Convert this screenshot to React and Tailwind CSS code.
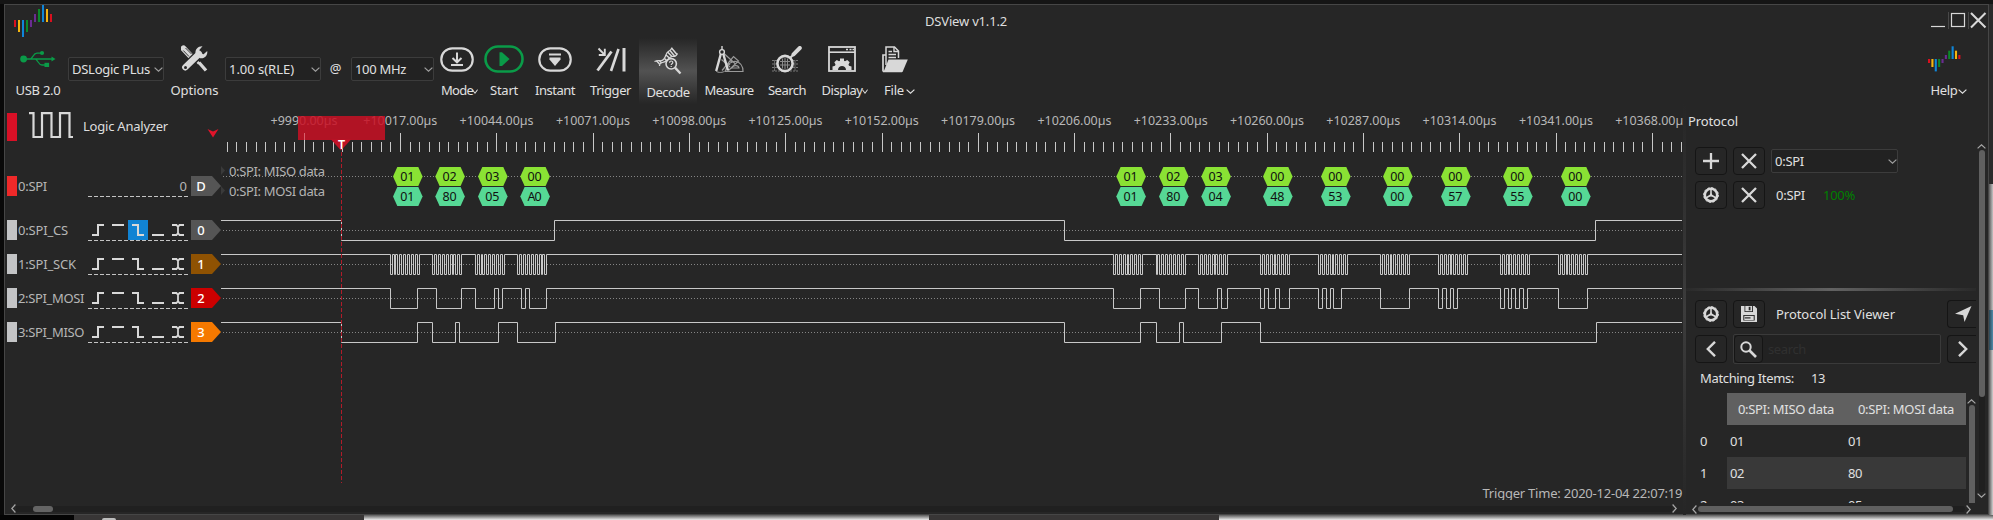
import React, { useLayoutEffect, useRef } from "react";

const INK = "#d8d8d8";
const BG = "#262626";

/* Text run whose tracking is adjusted so that it spans a given width. */
function T({ w, children, className = "" }) {
  const ref = useRef(null);
  useLayoutEffect(() => {
    const el = ref.current;
    if (!w || !el) return;
    el.style.letterSpacing = "0px";
    const n = String(children).length;
    const d = (w - el.getBoundingClientRect().width) / n;
    el.style.letterSpacing = d.toFixed(3) + "px";
  }, [w, children]);
  return (
    <span ref={ref} className={"inline-block whitespace-pre " + className}>
      {children}
    </span>
  );
}

function Chevron({ className = "", w = 9, h = 5 }) {
  return (
    <svg width={w} height={h} viewBox="0 0 9 5" preserveAspectRatio="none" className={"shrink-0 " + className}>
      <path d="M.6.6 4.5 4.2 8.4.6" fill="none" stroke="currentColor" strokeWidth="1.2" />
    </svg>
  );
}

const LOGO = [
  ["#d9101f", 20, 27], ["#f5b50f", 20, 32], ["#0f86d9", 20, 37], ["#0b8a2b", 20, 32], ["#6a2c91", 20, 27],
  ["#6a2c91", 14, 22], ["#0b8a2b", 9, 22], ["#0f86d9", 5, 22], ["#f5b50f", 9, 22], ["#d9101f", 14, 22],
];
function Logo() {
  return (
    <svg width="38" height="32" viewBox="14 5 38 32">
      {LOGO.map(([c, a, b], i) => <rect key={i} x={14 + i * 4} y={a} width="2" height={b - a} fill={c} />)}
    </svg>
  );
}
const HELP = [
  ["#d9101f", 59, 63], ["#f5b50f", 59, 67], ["#0f86d9", 59, 71.4], ["#0b8a2b", 59, 67], ["#6a2c91", 59, 63],
  ["#6a2c91", 55, 59], ["#0b8a2b", 50.7, 59], ["#0f86d9", 46.3, 59], ["#f5b50f", 50.7, 59], ["#d9101f", 55, 59],
];
function HelpLogo() {
  return (
    <svg width="33" height="26" viewBox="1928 46 33 26">
      {HELP.map(([c, a, b], i) => <rect key={i} x={1928 + i * 3.37} y={a} width="2.1" height={b - a} fill={c} />)}
    </svg>
  );
}

const UsbIcon = () => (
  <svg width="36" height="18" viewBox="20 50 36 18" fill="#0a9b48" stroke="#0a9b48">
    <circle cx="23.6" cy="59" r="3.4" stroke="none" />
    <path d="M23 59H53M30.5 59C33 57.5 33.5 53.2 37 53.2H41M35.5 59C38 60.5 38.500 65 42 65H46" fill="none" strokeWidth="1.3" />
    <path d="M51.500 56.600 55.500 59 51.500 61.400Z" stroke="none" />
    <circle cx="42" cy="53" r="2.100" stroke="none" />
    <rect x="44.500" y="62.800" width="4.600" height="4.200" stroke="none" />
  </svg>
);
const OptionsIcon = () => (
  <svg width="28" height="28" viewBox="0 0 28 28" fill="none">
    <path d="M2.500 3.500 9.500 11" stroke={INK} strokeWidth="6" strokeLinecap="round" />
    <path d="M2.300 5.500 8 11.500M4.500 3 10.500 9" stroke={BG} strokeWidth=".9" />
    <path d="M15 15.500 18 18.500" stroke={INK} strokeWidth="2.500" />
    <path d="M18 17.500 25 25.500" stroke={INK} strokeWidth="3.400" />
    <path d="M4.500 22.500 17 10" stroke={BG} strokeWidth="9" />
    <path d="M4.300 22.300 18 9" stroke={INK} strokeWidth="6.400" strokeLinecap="round" />
    <path d="M21.500 1.200C17 1 13.800 4.500 14.600 8.500L19 13.200C23.500 14 27 10.500 26.200 6L22.600 9.200 19 8.600 18.300 5Z" fill={INK} />
    <circle cx="4.500" cy="22.500" r="1.500" fill={BG} />
  </svg>
);
const ModeIcon = () => (
  <svg width="34" height="25" viewBox="0 0 34 25" fill="none" stroke={INK}>
    <rect x="1.300" y="1.300" width="31.400" height="22.400" rx="11" strokeWidth="2.200" />
    <path d="M17 5.500V14.500M12.500 11 17 15.300 21.500 11" strokeWidth="2" />
    <path d="M11 18H23" strokeWidth="2" />
  </svg>
);
const StartIcon = () => (
  <svg width="40" height="28" viewBox="0 0 40 28" fill="none">
    <rect x="1.500" y="1.500" width="37" height="25" rx="12.500" stroke="#0a9b48" strokeWidth="2.600" />
    <path d="M15.500 7.200H18L25.600 14 18 21H15.500Z" fill="#0a9b48" />
  </svg>
);
const InstantIcon = () => (
  <svg width="34" height="25" viewBox="0 0 34 25" fill="none" stroke={INK}>
    <rect x="1.300" y="1.300" width="31.400" height="22.400" rx="11" strokeWidth="2.200" />
    <path d="M11 7.500H23" strokeWidth="2" />
    <path d="M11.500 10.500H22.500V12.500L17 19 11.500 12.500Z" fill={INK} stroke="none" />
  </svg>
);
const TriggerIcon = () => (
  <svg width="30" height="25" viewBox="0 0 30 25" fill="none" stroke={INK}>
    <path d="M1.500 23.500 15.500 4.500" strokeWidth="2.800" />
    <path d="M15 24 22.500 2" strokeWidth="2.600" />
    <path d="M28 1V24.500" strokeWidth="3" />
    <path d="M2.500 1.500 8 7.200M8.800 1.800V8H2.800" strokeWidth="1.900" />
  </svg>
);
const DecodeIcon = () => (
  <svg width="28" height="28" viewBox="0 0 28 28" fill="none" stroke={INK} strokeWidth="1.200">
    <path d="M.5 14.500C6 12 6.500 15.500 9.500 12.500 12.500 10 11 6 15 4 17.500 2.800 17.500 2 17.800.5" />
    <path d="M5.500 19C5 14.500 9 16.500 12 14 15 11.500 16 9 19.500 9.500 21.500 9.700 22.500 8.500 23.500 6.500" />
    <path d="M2.500 13.800 5.500 17M5.500 13.800 7.500 15.700M10.500 11.500 13 14M12 8 16 11.500M13.500 5 18 9.500M16 3.500 20.500 9M17.700 1.200 23 7.500" strokeWidth="1.500" />
    <circle cx="17.200" cy="16.800" r="5.200" strokeWidth="1.600" fill="#3e3e3e" />
    <path d="M21 20.600 26.500 26.500" strokeWidth="2.300" />
    <path d="M15.600 15.700C15.600 13.500 18.800 13.500 18.800 15.500 18.800 16.800 17.200 16.600 17.200 18M17.200 19V20" strokeWidth="1.200" />
  </svg>
);
const MeasureIcon = () => (
  <svg width="30" height="27" viewBox="0 0 30 27" fill="none">
    <g stroke="#9a9a9a" strokeWidth="1.200">
      <path d="M11.500 25.500C12.500 17 19 15 22 15.500 26.500 16.500 29 20 29 25.500ZM17.500 22C19.500 18.500 24.500 19 25 22Z" />
      <path d="M8 24.500 19.500 10.500 24.500 15 14.500 24.500M10 7.500 21.500 18M7.500 13.500 16 21" />
      <path d="M12 19.500 14 21.200M14 17 16 18.800M16.200 14.500 18 16.200" />
    </g>
    <path d="M8 0V4" stroke={INK} strokeWidth="1.400" />
    <circle cx="8" cy="6" r="2.400" stroke={INK} strokeWidth="1.400" />
    <path d="M6.800 8 2.200 25M9.300 8 14 24.500" stroke={INK} strokeWidth="2.400" />
    <path d="M2 25C4 27 9 27 11.500 24.500" stroke="#9a9a9a" strokeWidth="1" />
  </svg>
);
const SearchIcon = () => (
  <svg width="30" height="27" viewBox="0 0 30 27" fill="none">
    <path d="M0 14.500H26M0 18H26M0 21.500H26M0 25H26" stroke="#777" strokeWidth="1.200" strokeDasharray="2 1" />
    <path d="M2.500 14V25M23 14V25" stroke="#666" strokeWidth="1" />
    <circle cx="13" cy="17.500" r="7.600" fill={BG} stroke={INK} strokeWidth="2.600" />
    <path d="M8 15.500H18M8 19H18M10.500 12.500V22.500M13 12V23M15.500 12.500V22.500" stroke="#8a8a8a" strokeWidth="1" />
    <path d="M18.500 11.500 21 9" stroke={INK} strokeWidth="2.200" />
    <path d="M21.500 8.300 27.800 2" stroke={INK} strokeWidth="4" strokeLinecap="round" />
  </svg>
);
const DisplayIcon = () => (
  <svg width="28" height="26" viewBox="0 0 28 26" fill="none">
    <rect x="1" y="1" width="26" height="24" stroke={INK} strokeWidth="1.800" />
    <path d="M1 6.200H27" stroke={INK} strokeWidth="1.600" />
    <path d="M18 3.500H20M21.500 3.500H23.500M24.500 3.500H26" stroke={INK} strokeWidth="1.600" />
    <path d="M4.500 24V20.500L7 19.800 7.500 18.600 6.300 16.300 8.800 14 11 15.200 12 14.700V12.500H16V14.700L17 15.200 19.200 14 21.700 16.300 20.500 18.600 21 19.800 23.500 20.500V24H18C18 18.500 10 18.500 10 24Z" fill={INK} />
  </svg>
);
const FileIcon = () => (
  <svg width="27" height="27" viewBox="0 0 27 27" fill="none">
    <path d="M2 25.500V9H5M2 25.500H21" stroke={INK} strokeWidth="1.700" />
    <path d="M5 19V1H13.500L17.500 5V12" stroke={INK} strokeWidth="1.500" />
    <path d="M13 1V5.500H17.500M7.500 5.500H11M7.500 8.500H15M7.500 11.500H15" stroke={INK} strokeWidth="1.400" />
    <path d="M7.500 13.500H26.800L21.500 26H2.500Z" fill={INK} />
  </svg>
);

function Tool({ icon, label, lw, cell, chev, chevW = 6, active }) {
  return (
    <div className={"relative flex h-[66px] shrink-0 flex-col items-center " + cell + (active ? " bg-[linear-gradient(#262626,#525252_50%,#262626)] pt-[2px]" : "")}>
      <div className="flex h-[42px] items-center justify-center">{icon}</div>
      <div className="relative flex h-[20px] items-center justify-center">
        <T w={lw}>{label}</T>
        {chev && <Chevron w={chevW} className={"absolute top-[9px] " + chev} />}
      </div>
    </div>
  );
}

function Combo({ text, tw, className }) {
  return (
    <div className={"flex h-[24px] shrink-0 items-center justify-between rounded-[2px] border border-[#3c3c3c] bg-[#222] pl-[3px] " + className}>
      <T w={tw}>{text}</T>
      <Chevron className="text-[#a0a0a0]" />
    </div>
  );
}

const TOOLS = [
  [<ModeIcon />, "Mode", 32, "w-[46px]", "left-[calc(100%-1px)]", 6],
  [<StartIcon />, "Start", 28, "w-[48px]"],
  [<InstantIcon />, "Instant", 40, "w-[54px]"],
  [<TriggerIcon />, "Trigger", 41, "w-[57px]"],
  [<DecodeIcon />, "Decode", 43, "w-[58px]", null, 0, true],
  [<MeasureIcon />, "Measure", 49, "w-[64px]"],
  [<SearchIcon />, "Search", 38, "w-[52px]"],
  [<DisplayIcon />, "Display", 41, "w-[58px]", "left-[calc(100%-1px)]", 6],
  [<FileIcon />, "File", 20, "w-[46px]", "left-[calc(100%+2px)]", 9],
];

function Toolbar() {
  return (
    <div className="flex h-[66px] shrink-0 pl-[5px] text-[#e0e0e0]">
      <Tool icon={<UsbIcon />} label="USB 2.0" lw={45} cell="w-[56px]" />
      <Combo text="DSLogic PLus" tw={78} className="ml-[2px] mt-[19px] w-[96px]" />
      <Tool icon={<OptionsIcon />} label="Options" lw={48} cell="ml-[6px] w-[49px]" />
      <Combo text="1.00 s(RLE)" tw={65} className="ml-[6px] mt-[19px] w-[96px]" />
      <div className="mt-[20px] w-[29px] shrink-0 text-center"><T>@</T></div>
      <Combo text="100 MHz" tw={51} className="ml-[1px] mt-[19px] w-[83px]" />
      {TOOLS.map(([icon, label, lw, cell, chev, cw, active]) => (
        <Tool key={label} icon={icon} label={label} lw={lw} cell={cell} chev={chev} chevW={cw} active={active} />
      ))}
      <Tool icon={<HelpLogo />} label="Help" lw={27} cell="ml-auto mr-[21px] w-[46px]" chev="left-full" chevW={9} />
    </div>
  );
}

function TitleBar() {
  return (
    <div className="flex h-[33px] shrink-0 pl-[9px] text-[#dedede]">
      <div className="w-[911px] shrink-0"><Logo /></div>
      <div className="pt-[6px]"><T w={82}>DSView v1.1.2</T></div>
      <div className="flex flex-1 justify-end">
        <svg width="60" height="26" viewBox="1928 5 60 26" fill="none" stroke={INK}>
          <path d="M1931 26.500H1945" strokeWidth="1.200" />
          <path d="M1948.500 12V29M1968.500 12V29" stroke="#484848" />
          <rect x="1951.500" y="13.500" width="13" height="13" strokeWidth="1.200" />
          <path d="M1971 13 1985.500 27.500M1985.500 13 1971 27.500" strokeWidth="2.100" />
        </svg>
      </div>
    </div>
  );
}

function TriggerModes({ active }) {
  return (
    <svg width="103" height="22" viewBox="88 0 103 22" fill="none" stroke={INK} strokeWidth="2" className="shrink-0">
      {active && <rect x="128" y="0" width="20" height="20" fill="#1183d3" stroke="none" />}
      <path d="M92 15H98V5H104M112 5H124M132 5H138V15H144M152 15H164" />
      <path d="M172 5H176.500L178 7V13L176.500 15H172M184 5H179.500L178 7M178 13 179.500 15H184" strokeWidth="1.800" />
      <path d="M88 20.500H188" strokeWidth="1" stroke="#c4c4c4" strokeDasharray="4 2" />
    </svg>
  );
}

function Tag({ fill, text }) {
  return (
    <svg width="30" height="20" viewBox="0 0 30 20" className="shrink-0">
      <path d="M0 0H21L30 10 21 20H0Z" fill={fill} />
      <text x="10" y="14.800" textAnchor="middle" fill="#fff" fontSize="13" fontWeight="500">{text}</text>
    </svg>
  );
}

const CHANNELS = [
  ["0:SPI_CS", 50, "#555555", "0", "mt-[24px]", true],
  ["1:SPI_SCK", 58, "#8f5202", "1", "mt-[14px]"],
  ["2:SPI_MOSI", 66, "#cc0000", "2", "mt-[14px]"],
  ["3:SPI_MISO", 66, "#f57900", "3", "mt-[14px]"],
];

function Channels() {
  return (
    <div className="flex w-[216px] shrink-0 flex-col pl-[2px] pt-[9px] text-[#b6b6b6]">
      <div className="flex h-[28px] shrink-0 items-start">
        <div className="h-[28px] w-[10px] bg-[#d81026]" />
        <svg width="46" height="28" viewBox="28 112 46 28" className="ml-[11px] mt-[-1px]" fill="none" stroke={INK} strokeWidth="2.200">
          <path d="M29 113.200H33.500V137H42V113.200H51.500V137H60V113.200H69.500V137H73" />
        </svg>
        <div className="ml-[9px] mt-[3px] text-[#dedede]"><T w={85}>Logic Analyzer</T></div>
        <svg width="12" height="9" viewBox="0 0 12 9" className="ml-[39px] mt-[16px]"><path d="M.5 0 6 2.500 11.500 0 6 8.500Z" fill="#e0142a" /></svg>
      </div>
      <div className="mt-[35px] flex h-[20px] shrink-0 items-center">
        <div className="h-[20px] w-[10px] bg-[#ef2929]" />
        <div className="w-[71px] pl-[1px]"><T w={29}>0:SPI</T></div>
        <div className="relative flex h-[20px] w-[103px] items-center justify-end pr-[4px]">
          0
          <svg width="100" height="1" className="absolute left-0 top-[20px]"><path d="M0 .5H100" stroke="#c4c4c4" strokeDasharray="4 2" /></svg>
        </div>
        <Tag fill="#555555" text="D" />
      </div>
      {CHANNELS.map(([name, w, fill, n, mt, act]) => (
        <div key={name} className={"flex h-[20px] shrink-0 items-center " + mt}>
          <div className="h-[20px] w-[10px] bg-[#c3c4c6]" />
          <div className="w-[71px] pl-[1px]"><T w={w}>{name}</T></div>
          <div className="h-[20px] w-[103px]"><TriggerModes active={act} /></div>
          <Tag fill={fill} text={n} />
        </div>
      ))}
    </div>
  );
}

const X0 = 221, X1 = 1682;
function wave(edges, hi) {
  let level = hi;
  let d = `M${X0} ${level + 0.5}`;
  for (const x of edges) {
    d += `H${x + 0.5}`;
    level = level === hi ? hi + 20 : hi;
    d += `V${level + 0.5}`;
  }
  return d + `H${X1}`;
}
const CS = [341, 554, 1064, 1595];
const MISO = [341, 417, 432, 455, 459, 498, 517, 555, 1064, 1140, 1156, 1179, 1183, 1221, 1260, 1596];
const MOSI = [390, 417, 436, 461, 475, 494, 498, 502, 521, 525, 529, 546, 1113, 1140, 1159, 1185, 1198, 1217, 1221, 1227, 1260, 1264, 1268, 1275, 1279, 1289, 1318, 1322, 1326, 1330, 1333, 1341, 1380, 1409, 1438, 1442, 1446, 1450, 1453, 1457, 1500, 1504, 1508, 1511, 1515, 1519, 1523, 1527, 1558, 1587];
/* Clock bursts: first edge, and the edge index after which the spacing is 1px. */
const BURSTS = [[390, 3], [432, 11], [475, 4], [517, 13], [1113, 8], [1156, 1], [1198, 9], [1260, 8], [1318, 8], [1380, 6], [1438, 7], [1500, 5], [1558, 5]];
const SCK = BURSTS.flatMap(([s, k]) => Array.from({ length: 16 }, (_, i) => s + i * 2 - (i >= k ? 1 : 0)));
const BYTES = [
  [393, "01", "01"], [435.300, "02", "80"], [478, "03", "05"], [520.300, "00", "A0"],
  [1116.300, "01", "01"], [1159, "02", "80"], [1201.300, "03", "04"], [1263, "00", "48"], [1321, "00", "53"],
  [1383, "00", "00"], [1441, "00", "57"], [1503, "00", "55"], [1561, "00", "00"],
];
const TICKS = Array.from({ length: 152 }, (_, i) => i - 8);

function Hex({ x, y, fill, text }) {
  return (
    <g>
      <path d={`M${x} ${y + 9.5}L${x + 4.300} ${y}H${x + 25.300}L${x + 29.600} ${y + 9.5}L${x + 25.300} ${y + 19}H${x + 4.300}Z`} fill={fill} />
      <text x={x + 14.300} y={y + 14} textAnchor="middle" fontSize="12.500" textLength="14" fill="#101010">{text}</text>
    </g>
  );
}

function WaveCanvas() {
  return (
    <svg width="1462" height="396" viewBox="221 104 1462 396" className="block shrink-0" fill="none">
      {TICKS.map((i) => {
        const x = Math.floor(304.2 + i * 9.63) + 0.5;
        return x > 1682 ? null : <path key={i} d={`M${x} ${i % 10 === 0 ? 133 : 142}V152`} stroke="#c8c8c8" />;
      })}
      {Array.from({ length: 15 }, (_, i) => (
        <text key={i} x={304 + i * 96.300} y="125" textAnchor="middle" fontSize="12.500" fill="#b8b8b8" textLength={i ? 74 : 67}>
          {"+" + (9990 + i * 27) + ".00µs"}
        </text>
      ))}
      {[176, 230, 264, 298, 332].map((y) => <path key={y} d={`M223 ${y + 0.5}H1683`} stroke="#858585" strokeDasharray="1 2" />)}
      <path d="M221 166 225 170.500 221 175ZM221 186 225 190.500 221 195Z" fill="#3a3a3a" />
      <text x="229" y="176" fontSize="13" fill="#b4b4b4" textLength="96">0:SPI: MISO data</text>
      <text x="229" y="196" fontSize="13" fill="#b4b4b4" textLength="96">0:SPI: MOSI data</text>
      {BYTES.map(([x, a, b]) => (
        <g key={x}>
          <Hex x={x} y={167} fill="#8ae234" text={a} />
          <Hex x={x} y={187} fill="#56d895" text={b} />
        </g>
      ))}
      <g stroke="#c8c8c8">
        <path d={wave(CS, 220)} />
        <path d={wave(SCK, 254)} />
        <path d={wave(MOSI, 288)} />
        <path d={wave(MISO, 322)} />
      </g>
      <path d="M298 116H385V140H298Z" fill="#c81024" fillOpacity=".86" />
      <path d="M304.500 133V140" stroke="#d8606c" />
      <path d="M331 139.500H351L341 150.500Z" fill="#c01226" />
      <text x="341.500" y="149" textAnchor="middle" fontSize="12.500" fontWeight="600" fill="#fff">T</text>
      <path d="M341.500 152V483" stroke="#b01c2a" strokeDasharray="4 2" />
      <text x="1482.500" y="498" fontSize="13" fill="#b8b8b8" textLength="200">Trigger Time: 2020-12-04 22:07:19</text>
    </svg>
  );
}

function SideArrow({ flip }) {
  return (
    <svg width="5" height="9" viewBox="0 0 5 9" className="shrink-0">
      <path d={flip ? "M.6.5 4.200 4.500.6 8.500" : "M4.400.5.8 4.500 4.400 8.500"} fill="none" stroke="#a8a8a8" strokeWidth="1.200" />
    </svg>
  );
}

function Btn({ children, className = "w-[32px] rounded-[4px] border" }) {
  return <div className={"flex h-[28px] shrink-0 items-center justify-center border-[#151515] " + className}>{children}</div>;
}
const Cross = () => <svg width="16" height="16" viewBox="0 0 16 16"><path d="M1 1 15 15M15 1 1 15" stroke={INK} strokeWidth="2.300" /></svg>;
const Plus = () => <svg width="16" height="16" viewBox="0 0 16 16"><path d="M8 0V16M0 8H16" stroke={INK} strokeWidth="2.300" /></svg>;
const Gear = () => (
  <svg width="16" height="16" viewBox="0 0 16 16" fill="none" stroke={INK}>
    <circle cx="8" cy="8" r="6.200" strokeWidth="2.600" />
    <circle cx="8" cy="8" r="7.400" strokeWidth="1" strokeDasharray="2.200 1.670" />
    <path d="M8 2V8L2.800 11M8 8 13.200 11" strokeWidth="1.600" />
    <path d="M8 5.800 10.200 9.600H5.800Z" fill={INK} stroke="none" />
  </svg>
);
const Save = () => (
  <svg width="16" height="16" viewBox="0 0 16 16">
    <path d="M0 0H3.500V6H12V0H13.500L16 2.500V16H0Z" fill={INK} />
    <rect x="4.300" y="0" width="6.800" height="5.200" fill={INK} />
    <rect x="7.700" y=".8" width="1.800" height="3.500" fill={BG} />
    <path d="M2.300 9H13.700V14.500H2.300Z" fill={BG} /><path d="M3.300 9.900H12.700V14H3.300Z" fill={INK} /><path d="M3.800 11.900H9.500" stroke={BG} strokeWidth="1.200" />
  </svg>
);

function Dock() {
  return (
    <div className="flex w-[302px] shrink-0 flex-col text-[#e0e0e0]">
      <div className="h-[34px] shrink-0 pl-[2px] pt-[7px]"><T w={50}>Protocol</T></div>
      <div className="flex h-[365px] shrink-0">
        <div className="flex w-[290px] shrink-0 flex-col overflow-hidden pt-[9px]">
          <div className="flex h-[28px] shrink-0 items-center gap-[6px] pl-[9px]">
            <Btn><Plus /></Btn>
            <Btn><Cross /></Btn>
            <Combo text="0:SPI" tw={29} className="w-[127px]" />
          </div>
          <div className="mt-[6px] flex h-[28px] shrink-0 items-center gap-[6px] pl-[9px]">
            <Btn><Gear /></Btn>
            <Btn><Cross /></Btn>
            <div className="w-[46px] pl-[5px]"><T w={29}>0:SPI</T></div>
            <div className="text-[#008000]"><T w={32}>100%</T></div>
          </div>
          <div className="mt-[79px] h-[3px] shrink-0 bg-[linear-gradient(90deg,#2a2a2a,#626262_50%,#2a2a2a)]" />
          <div className="mt-[9px] flex h-[28px] shrink-0 items-center gap-[6px] pl-[9px]">
            <Btn><Gear /></Btn>
            <Btn><Save /></Btn>
            <div className="w-[170px] pl-[5px]"><T w={119}>Protocol List Viewer</T></div>
            <Btn className="w-[29px] rounded-l-[4px] border-y border-l">
              <svg width="17" height="16" viewBox="0 0 17 16" className="ml-[3px]"><path d="M16.500 0 9.500 16 8.200 9.300 0 7.800Z" fill={INK} /></svg>
            </Btn>
          </div>
          <div className="mt-[7px] flex h-[28px] shrink-0 items-center gap-[6px] pl-[9px]">
            <Btn><svg width="10" height="16" viewBox="0 0 10 16"><path d="M9 .8 1.800 8 9 15.200" fill="none" stroke={INK} strokeWidth="2.400" /></svg></Btn>
            <div className="flex h-[30px] w-[208px] items-center rounded-[2px] border border-[#3a3a3a] bg-[#222]">
              <Btn className="w-[29px] rounded-[4px] border border-[#3a3a3a] bg-[#262626]">
                <svg width="17" height="17" viewBox="0 0 17 17" fill="none" stroke={INK}><circle cx="6" cy="6" r="4.700" strokeWidth="2" /><path d="M9.500 9.500 16 16" strokeWidth="2.600" /></svg>
              </Btn>
              <div className="pl-[5px] text-[#303030]"><T w={38}>search</T></div>
            </div>
            <Btn className="w-[29px] rounded-l-[4px] border-y border-l"><svg width="10" height="16" viewBox="0 0 10 16" className="ml-[2px]"><path d="M1 .8 8.200 8 1 15.200" fill="none" stroke={INK} strokeWidth="2.400" /></svg></Btn>
          </div>
          <div className="flex h-[30px] shrink-0 items-center pl-[14px]">
            <div className="w-[111px]"><T w={94}>Matching Items:</T></div><T w={14}>13</T>
          </div>
          <div className="flex h-[110px] shrink-0 overflow-hidden">
            <div className="flex w-[280px] shrink-0 flex-col">
              <div className="ml-[41px] flex h-[32px] shrink-0 items-center bg-[#606060] pl-[11px]">
                <div className="w-[120px]"><T w={96}>0:SPI: MISO data</T></div>
                <T w={96}>0:SPI: MOSI data</T>
              </div>
              {[["0", "01", "01", ""], ["1", "02", "80", "bg-[#393939]"], ["2", "03", "05", ""]].map(([n, a, b, bg]) => (
                <div key={n} className="flex h-[32px] shrink-0">
                  <div className="flex w-[41px] items-center pl-[14px]">{n}</div>
                  <div className={"flex w-[239px] items-center pl-[3px] " + bg}>
                    <div className="w-[118px]"><T w={14}>{a}</T></div><T w={14}>{b}</T>
                  </div>
                </div>
              ))}
            </div>
            <div className="flex w-[10px] flex-col items-center pt-[6px] pl-[1px] text-[#a8a8a8]">
              <Chevron className="rotate-180" />
              <div className="mt-[1px] h-[98px] w-[6px] shrink-0 rounded-t-[3px] bg-[#606060]" />
            </div>
          </div>
        </div>
        <div className="flex w-[12px] flex-col items-center pt-[6px] pr-[1px] text-[#a8a8a8]">
          <Chevron className="rotate-180" />
          <div className="mt-[1px] h-[342px] w-[6px] shrink-0 rounded-[3px] bg-[#1f1f1f]"><div className="h-[247px] rounded-[3px] bg-[#606060]" /></div>
          <Chevron className="mt-[1px]" />
        </div>
      </div>
      <div className="flex h-[12px] shrink-0 items-center pl-[6px]">
        <SideArrow />
        <div className="mx-[1px] h-[6px] w-[267px] rounded-[3px] bg-[#1f1f1f]"><div className="h-[6px] w-[255px] rounded-[3px] bg-[#606060]" /></div>
        <SideArrow flip />
      </div>
    </div>
  );
}

export default function App() {
  return (
    <div className="flex h-[520px] w-[1993px] flex-col overflow-hidden bg-[#0a0a0a] font-['Noto_Sans','Open_Sans',sans-serif] text-[13px] leading-[20px]">
      <div className="h-[4px] shrink-0 bg-[#151515]" />
      <div className="flex h-[511px] shrink-0">
        <div className="w-[4px] shrink-0 bg-[#090909]" />
        <div className="flex w-[1985px] shrink-0 flex-col border border-[#464646] bg-[#262626]">
          <TitleBar />
          <Toolbar />
          <div className="flex h-[411px] shrink-0">
            <div className="flex w-[1678px] shrink-0 flex-col">
              <div className="flex h-[396px]">
                <Channels />
                <WaveCanvas />
              </div>
              <div className="flex h-[15px] items-center pl-[6px] pb-[1px] pt-[3px]">
                <SideArrow />
                <div className="h-[6px] w-[1656px] bg-[#202020] pl-[17px]"><div className="h-[6px] w-[20px] rounded-[3px] bg-[#646464]" /></div>
                <SideArrow flip />
              </div>
            </div>
            <div className="w-[3px] shrink-0 bg-[linear-gradient(#262626,#3c3c3c_50%,#262626)]" />
            <Dock />
          </div>
        </div>
        <div className="flex w-[4px] shrink-0 flex-col">
          <div className="h-[180px] shrink-0 bg-[#2a2a2a]" />
          <div className="h-[126px] shrink-0 bg-[linear-gradient(90deg,#5a5a5a,#c4c4c4)]" />
          <div className="h-[40px] shrink-0 bg-[linear-gradient(90deg,#2c4654,#4f8cab)]" />
          <div className="h-[165px] shrink-0 bg-[linear-gradient(90deg,#5a5a5a,#d0d0d0)]" />
        </div>
      </div>
      <div className="flex h-[5px] shrink-0">
        <div className="w-[74px] bg-[#040404]" />
        <div className="flex w-[290px] items-end bg-[#383636] pl-[28px]"><div className="h-[2px] w-[14px] rounded-t bg-[#bdbdbd]" /></div>
        <div className="w-[565px] bg-[linear-gradient(#5a5a5a,#ececec)]" />
        <div className="w-[290px] bg-[#383636]" />
        <div className="flex-1 bg-[linear-gradient(#5a5a5a,#ececec)]" />
      </div>
    </div>
  );
}
